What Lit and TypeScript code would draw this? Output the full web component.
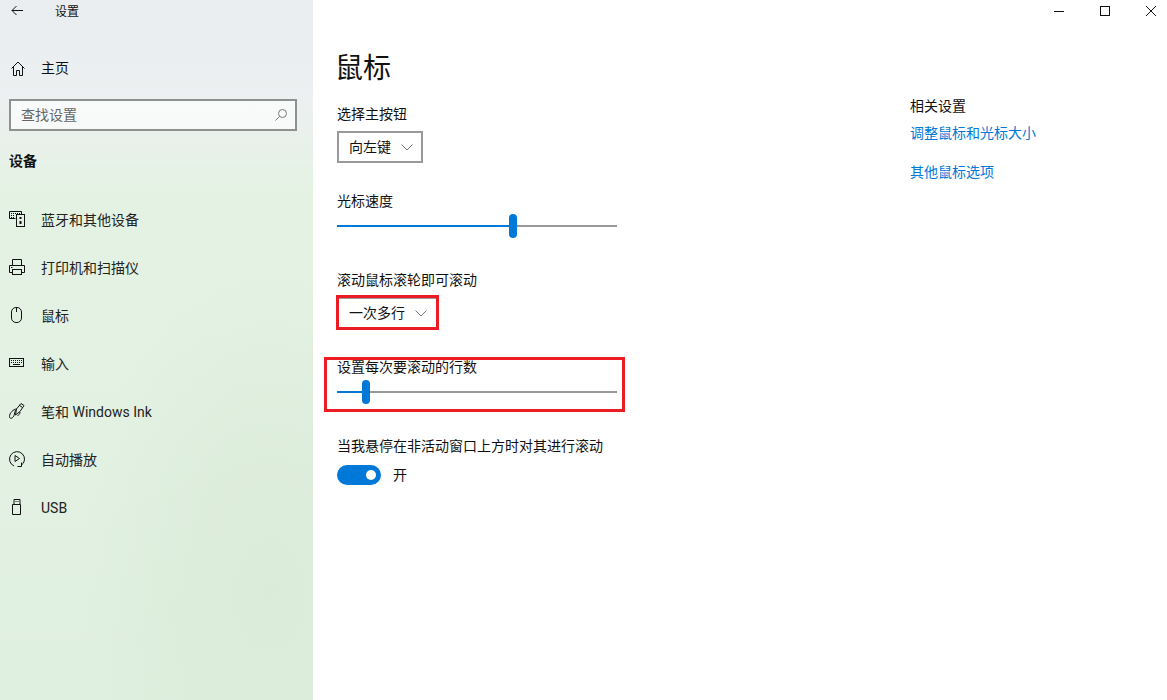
import { LitElement, html, css, svg } from "lit";
import { customElement } from "lit/decorators.js";

const navItems = [
  {
    label: "蓝牙和其他设备",
    icon: svg`<path d="M15.500 8.500h-6v-7h12v3"/><path d="M11 3.500h9M11 5.500h4M11 7.500h4" stroke-dasharray="1 1"/><rect x="16.500" y="4.500" width="8" height="12"/><path d="M20.500 7v2M20.500 11v3" stroke-width="2"/>`,
  },
  {
    label: "打印机和扫描仪",
    icon: svg`<path d="M12.500 7.500v-6h9v6M12.500 14.500h-3v-7h15v7h-3"/><rect x="12.500" y="11.500" width="9" height="5"/><path d="M11 9.500h1.500"/>`,
  },
  {
    label: "鼠标",
    icon: svg`<rect x="11.500" y="1.500" width="10" height="15" rx="4.500"/><path d="M16.500 2v4"/>`,
  },
  {
    label: "输入",
    icon: svg`<rect x="9.500" y="4.500" width="14" height="8"/><path d="M11 6.500h11M11 8.500h11" stroke-dasharray="1 1"/><path d="M13 10.500h7"/>`,
  },
  {
    label: "笔和 Windows Ink",
    icon: svg`<path d="M15.500 13l1-6 4.500-5.500 3 2-4 6zM19 3l3.500 2.500M16.500 7c-3 0-7 4-7 7.500 0 3 3.500 2 4.500-1l1.500-5.500M20 10c0 2-1 3-2.500 3.500"/>`,
  },
  {
    label: "自动播放",
    icon: svg`<path d="M21 15.500A7.500 7.500 0 1 0 14 16M21.500 12.500v4h-4M15 5.500v6l4.500-3z"/>`,
  },
  {
    label: "USB",
    icon: svg`<path d="M14 6.500v-5h6v5M12.500 6.500h8v10h-8z"/><path d="M15.500 3.500h1M17.500 3.500h1"/>`,
  },
];

const chevron = html`<svg width="12" height="7" viewBox="0 0 12 7"><path d="M.5.500L6 6 11.500.500"/></svg>`;

@customElement("app-root")
export class AppRoot extends LitElement {
  static styles = css`
    :host {
      display: flex;
      width: 1167px;
      height: 700px;
      overflow: hidden;
      background: #fff;
      color: #111;
      font: 14px/20px Roboto, "Noto Sans CJK SC", sans-serif;
    }
    svg {
      display: block;
      fill: none;
      stroke: currentColor;
      stroke-width: 1;
    }

    /* left pane */
    .side {
      flex: 0 0 313px;
      box-sizing: border-box;
      height: 700px;
      background:
        radial-gradient(ellipse 190px 330px at 270px 590px, #dbebd9, transparent),
        linear-gradient(180deg, #e9edf0 0, #edf0f1 100px, #e4f2e3 190px, #e0f0e0 700px);
    }
    .side-title {
      display: flex;
      align-items: center;
      height: 22px;
      padding-left: 11px;
    }
    .side-title span {
      margin: 2px 0 0 32px;
      font-size: 12px;
    }
    .home {
      display: flex;
      align-items: center;
      height: 48px;
      margin-top: 22px;
      padding-left: 11px;
    }
    .home span {
      margin-left: 16px;
    }
    .search {
      display: flex;
      align-items: center;
      justify-content: space-between;
      box-sizing: border-box;
      width: 288px;
      height: 32px;
      margin: 7px 0 0 9px;
      padding: 0 8px 0 10px;
      border: 2px solid #8e918e;
      background: rgba(255, 255, 255, 0.65);
      color: #666;
    }
    .search svg {
      stroke: #777;
    }
    .section {
      margin: 20px 0 0 9px;
      font-weight: 700;
    }
    nav {
      margin-top: 25px;
    }
    .nav-item {
      display: flex;
      align-items: center;
      height: 48px;
    }
    .nav-item svg {
      flex: none;
    }
    .nav-item span {
      margin-left: 8px;
      color: #222;
    }

    /* right pane */
    .content {
      flex: 1;
      min-width: 0;
    }
    .controls {
      display: flex;
      justify-content: flex-end;
      height: 22px;
      margin-right: -7px;
    }
    .controls div {
      display: flex;
      align-items: center;
      justify-content: center;
      width: 46px;
      height: 22px;
    }
    .controls svg {
      stroke: #111;
    }
    .body {
      display: flex;
      padding-left: 24px;
    }
    .main {
      width: 573px;
    }
    h1 {
      margin: 27px 0 0 -2px;
      font-size: 28px;
      line-height: 40px;
      font-weight: 400;
    }
    .label {
      margin-top: 15px;
    }
    .select {
      display: flex;
      align-items: center;
      gap: 10px;
      box-sizing: border-box;
      width: 86px;
      height: 32px;
      margin-top: 7px;
      padding: 0 8px 0 10px;
      border: 2px solid #999;
      white-space: nowrap;
    }
    .select svg {
      flex: none;
      stroke: #777;
    }
    .mt-28 {
      margin-top: 28px;
    }
    .mt-32 {
      margin-top: 32px;
    }
    .slider {
      display: flex;
      align-items: center;
      width: 280px;
      height: 24px;
      margin-top: 3px;
    }
    .fill {
      height: 2px;
      background: #0078d7;
    }
    .thumb {
      flex: none;
      width: 8px;
      height: 24px;
      border-radius: 4px;
      background: #0078d7;
    }
    .rest {
      flex: 1;
      height: 2px;
      background: #999;
    }
    .marked {
      position: relative;
    }
    .marked::after {
      content: "";
      position: absolute;
      border: 3px solid #ed1c24;
      pointer-events: none;
    }
    .mark-select {
      width: 101px;
      margin-top: 7px;
    }
    .mark-select .select {
      width: 101px;
      margin: 0;
      border-right-width: 1px;
    }
    .mark-select::after {
      inset: -2px -1px -1px -1px;
    }
    .mark-slider {
      width: 280px;
      margin-top: 28px;
    }
    .mark-slider .label {
      margin: 0;
    }
    .mark-slider::after {
      inset: 0 -8px -8px -13px;
    }
    .toggle-row {
      display: flex;
      align-items: center;
      gap: 12px;
      height: 20px;
      margin-top: 9px;
    }
    .toggle {
      display: flex;
      justify-content: flex-end;
      align-items: center;
      box-sizing: border-box;
      width: 44px;
      height: 20px;
      padding-right: 5px;
      border-radius: 10px;
      background: #0078d7;
    }
    .toggle i {
      width: 10px;
      height: 10px;
      border-radius: 50%;
      background: #fff;
    }
    aside {
      padding-top: 74px;
    }
    aside a {
      display: block;
      color: #0078d7;
    }
    aside a.first {
      margin-top: 7px;
    }
    aside a.second {
      margin-top: 19px;
    }
  `;

  private slider(percent: number) {
    return html`<div class="slider">
      <div class="fill" style="width:${percent}%"></div>
      <div class="thumb"></div>
      <div class="rest"></div>
    </div>`;
  }

  render() {
    return html`
      <div class="side">
        <div class="side-title">
          <svg width="12" height="12" viewBox="0 0 12 12"><path d="M12 5.500H1M5.500 1L1 5.500 5.500 10"/></svg>
          <span>设置</span>
        </div>
        <div class="home">
          <svg width="14" height="15" viewBox="0 0 14 15"><path d="M.5 7.500L7 1l6.500 6.500M2.500 6v8.500h3v-5h3v5h3V6"/></svg>
          <span>主页</span>
        </div>
        <div class="search">
          <span>查找设置</span>
          <svg width="12" height="12" viewBox="0 0 12 12"><circle cx="7.500" cy="4.500" r="4"/><path d="M4.500 7.500L.5 11.500"/></svg>
        </div>
        <div class="section">设备</div>
        <nav>
          ${navItems.map(
            (item) => html`<div class="nav-item">
              <svg width="33" height="20" viewBox="0 0 33 20">${item.icon}</svg>
              <span>${item.label}</span>
            </div>`
          )}
        </nav>
      </div>
      <div class="content">
        <div class="controls">
          <div><svg width="10" height="10" viewBox="0 0 10 10"><path d="M0 5.500h10"/></svg></div>
          <div><svg width="10" height="10" viewBox="0 0 10 10"><rect x=".5" y=".5" width="9" height="9"/></svg></div>
          <div><svg width="10" height="10" viewBox="0 0 10 10"><path d="M0 0l10 10M10 0L0 10"/></svg></div>
        </div>
        <div class="body">
          <div class="main">
            <h1>鼠标</h1>
            <div class="label">选择主按钮</div>
            <div class="select">向左键 ${chevron}</div>
            <div class="label mt-28">光标速度</div>
            ${this.slider(61.5)}
            <div class="label mt-32">滚动鼠标滚轮即可滚动</div>
            <div class="marked mark-select">
              <div class="select">一次多行 ${chevron}</div>
            </div>
            <div class="marked mark-slider">
              <div class="label">设置每次要滚动的行数</div>
              ${this.slider(9)}
            </div>
            <div class="label mt-32">当我悬停在非活动窗口上方时对其进行滚动</div>
            <div class="toggle-row">
              <div class="toggle"><i></i></div>
              <span>开</span>
            </div>
          </div>
          <aside>
            <div>相关设置</div>
            <a class="first">调整鼠标和光标大小</a>
            <a class="second">其他鼠标选项</a>
          </aside>
        </div>
      </div>
    `;
  }
}
